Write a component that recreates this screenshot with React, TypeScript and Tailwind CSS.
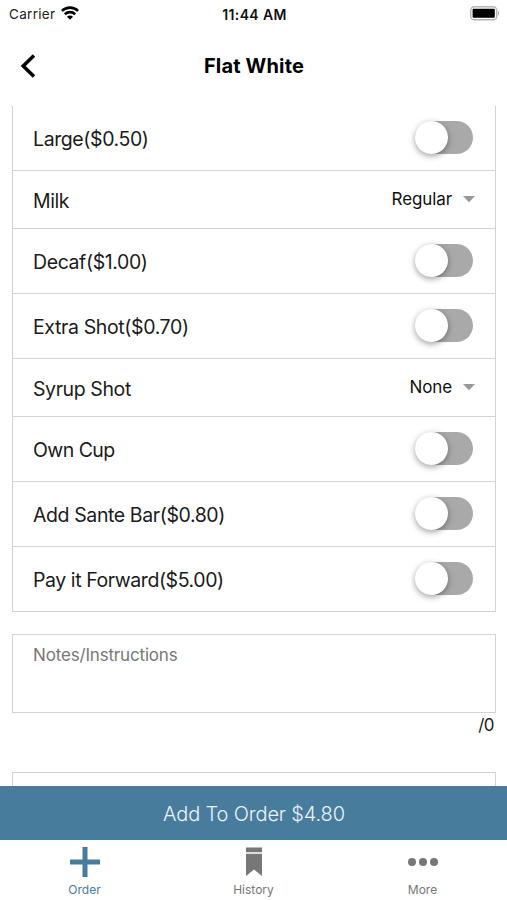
interface Option {
  label: string;
  tracking: string;
  value?: string;
}

const OPTIONS: Option[] = [
  { label: "Large($0.50)", tracking: "tracking-[-0.4px]" },
  { label: "Milk", tracking: "tracking-[-0.4px]", value: "Regular" },
  { label: "Decaf($1.00)", tracking: "tracking-[-0.4px]" },
  { label: "Extra Shot($0.70)", tracking: "tracking-[-0.37px]" },
  { label: "Syrup Shot", tracking: "tracking-[-0.4px]", value: "None" },
  { label: "Own Cup", tracking: "tracking-[-0.55px]" },
  { label: "Add Sante Bar($0.80)", tracking: "tracking-[-0.4px]" },
  { label: "Pay it Forward($5.00)", tracking: "tracking-[-0.43px]" },
];

function StatusBar() {
  return (
    <div className="grid h-7 shrink-0 grid-cols-3 items-center pl-[9px] pr-[7px] text-[13.5px] leading-none">
      <div className="flex items-center gap-[6px] text-[#222]">
        <span className="pt-px tracking-[0.3px]">Carrier</span>
        <svg className="-mt-[3px]" width="18" height="14" viewBox="0 0 18 14" fill="none" stroke="#000" strokeWidth="2.6">
          <path d="M0.9 4.9a11.6 11.6 0 0 1 16.2 0" />
          <path d="M3.8 8.2a7.5 7.5 0 0 1 10.4 0" />
          <path d="M9 13.8 6 10.8a4.2 4.2 0 0 1 6 0z" fill="#000" stroke="none" />
        </svg>
      </div>
      <span className="pt-px text-center text-[14px] font-semibold tracking-[0.35px] text-[#111]">11:44 AM</span>
      <svg className="-mt-[2px] justify-self-end" width="30" height="15" viewBox="0 0 30 15">
        <rect x="0.7" y="0.8" width="26" height="13" rx="3.6" fill="#fff" stroke="#b4b4b4" strokeWidth="1.4" />
        <rect x="2.6" y="2.8" width="22.2" height="9" rx="1" fill="#000" />
        <path d="M28 5v4.6c1.6-.6 1.6-4 0-4.6z" fill="#aaa" />
      </svg>
    </div>
  );
}

function Toggle() {
  return (
    <div className="mr-[22px] mb-[2px] flex h-[33px] w-[57px] rounded-full bg-[#a9a9a9]">
      <div className="-ml-px size-[33px] rounded-full bg-white shadow-[0_2px_6px_rgba(0,0,0,0.38)]" />
    </div>
  );
}

function OptionRow({ label, tracking, value }: Option) {
  return (
    <div
      className={`flex items-center justify-between border-b border-[#d3d3d3] pl-5 ${value ? "h-[58px]" : "h-[65px]"}`}
    >
      <span className={`pt-1 text-[19.5px] text-[#1b1b1b] ${tracking}`}>{label}</span>
      {value ? (
        <div className="mr-5 flex items-center gap-[11px]">
          <span className="text-[17px] tracking-[-0.1px] text-[#111]">{value}</span>
          <svg width="12" height="7" viewBox="0 0 12 7">
            <path d="M0 0h12L6 6.2z" fill="#999" />
          </svg>
        </div>
      ) : (
        <Toggle />
      )}
    </div>
  );
}

export default function App() {
  return (
    <div className="flex h-[900px] w-[507px] flex-col overflow-hidden bg-white font-['Inter',sans-serif]">
      <StatusBar />

      <header className="grid h-[78px] shrink-0 grid-cols-3 items-center px-5 pb-[3px]">
        <svg width="18" height="26" viewBox="0 0 18 26" fill="none" stroke="#000" strokeWidth="3.5">
          <path d="M14 2.4 3.2 13 14 23.6" />
        </svg>
        <h1 className="pl-px text-center text-[20px] font-bold tracking-[0.15px] whitespace-nowrap text-black">
          Flat White
        </h1>
      </header>

      <main className="min-h-0 flex-1 overflow-hidden pr-[11px] pl-3">
        <section className="border-x border-[#d3d3d3]">
          {OPTIONS.map((option) => (
            <OptionRow key={option.label} {...option} />
          ))}
        </section>

        <div className="mt-[22px] h-[79px] border border-[#d3d3d3] px-5 pt-2 text-[17px] leading-6 tracking-[-0.17px] text-[#777]">
          Notes/Instructions
        </div>
        <div className="pr-[2px] text-right text-[17px] leading-6 tracking-[-0.5px] text-[#222]">/0</div>

        <div className="mt-[35px] h-[60px] border border-[#d3d3d3]" />
      </main>

      <button className="h-[54px] shrink-0 bg-[#487c9d] pt-px pl-px text-[20px] font-light tracking-[-0.15px] text-[#eaf4fb]">
        Add To Order $4.80
      </button>

      <nav className="grid h-[60px] shrink-0 grid-cols-3 text-[12px] text-[#777]">
        <div className="flex flex-col items-center pt-[7px] text-[#487c9d]">
          <svg width="30" height="30" viewBox="0 0 30 30" fill="currentColor">
            <path d="M12.5 0h5v12.5H30v5H17.5V30h-5V17.5H0v-5h12.5z" />
          </svg>
          <span className="mt-[5px] leading-4">Order</span>
        </div>
        <div className="flex flex-col items-center pt-[7px]">
          <svg width="16" height="30" viewBox="0 0 16 30" fill="currentColor">
            <path d="M0 0.5h16v4.7H0zM0 6.7h16V29l-8-6.6L0 29z" />
          </svg>
          <span className="mt-[5px] leading-4">History</span>
        </div>
        <div className="flex flex-col items-center pt-[7px]">
          <svg width="30" height="30" viewBox="0 0 30 30" fill="currentColor">
            <circle cx="4" cy="15" r="4" />
            <circle cx="15" cy="15" r="4" />
            <circle cx="26" cy="15" r="4" />
          </svg>
          <span className="mt-[5px] leading-4">More</span>
        </div>
      </nav>
    </div>
  );
}
